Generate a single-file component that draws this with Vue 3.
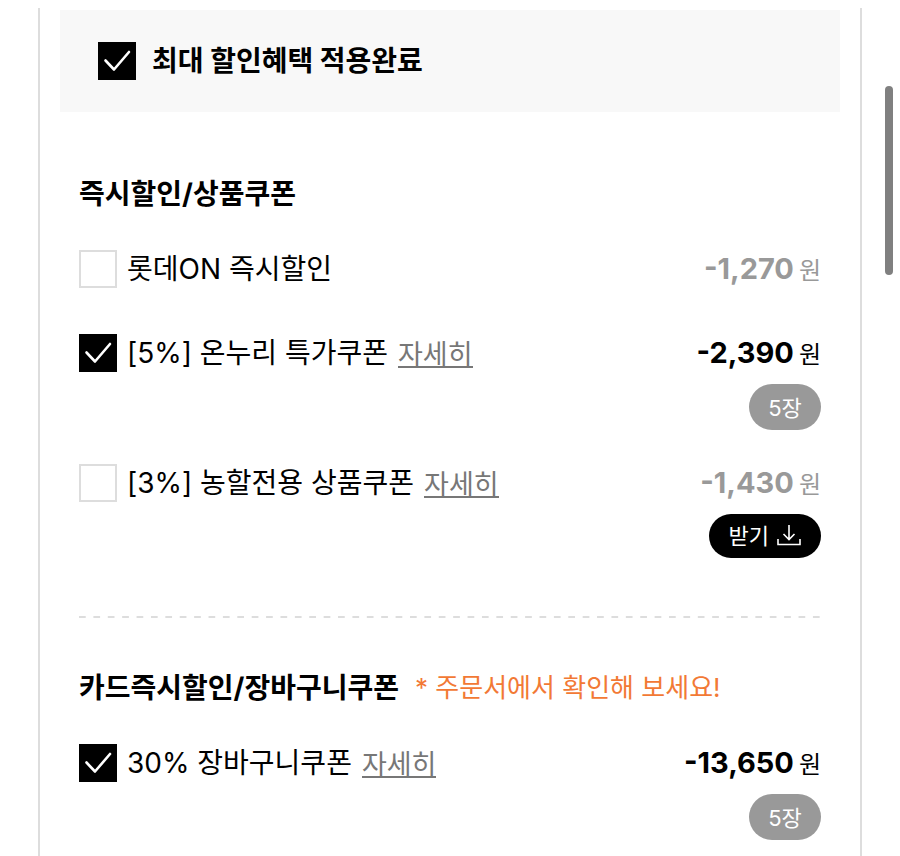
<template>
  <main class="page">
    <div class="panel">
      <label class="banner">
        <input v-model="maxApplied" type="checkbox" class="check" />
        <span class="banner-text">최대 할인혜택 적용완료</span>
      </label>

      <section v-for="group in groups" :key="group.title" class="group">
        <header class="group-head">
          <h2>{{ group.title }}</h2>
          <span v-if="group.notice" class="notice">{{ group.notice }}</span>
        </header>

        <ul class="list">
          <li v-for="item in group.items" :key="item.id" class="item">
            <div class="row">
              <input :id="item.id" v-model="item.checked" type="checkbox" class="check" />
              <label :for="item.id" class="name">{{ item.name }}</label>
              <a v-if="item.detail" href="#" class="detail" @click.prevent>자세히</a>
              <span class="price" :class="{ on: item.checked }">
                <strong>-{{ item.amount.toLocaleString('en-US') }}</strong>
                <span class="won">원</span>
              </span>
            </div>
            <span v-if="item.count" class="badge">{{ item.count }}장</span>
            <button v-if="item.downloadable" type="button" class="download">
              <span>받기</span>
              <svg viewBox="0 0 24 24" width="24" height="24" aria-hidden="true">
                <path d="M12 1v14.5M6.5 10l5.5 5.5 5.5-5.5M1 15v5.5h22V15" />
              </svg>
            </button>
          </li>
        </ul>
      </section>
    </div>
    <div class="scroll-thumb"></div>
  </main>
</template>

<script setup>
import { reactive, ref } from 'vue'

const maxApplied = ref(true)

const groups = reactive([
  {
    title: '즉시할인/상품쿠폰',
    items: [
      { id: 'instant', name: '롯데ON 즉시할인', amount: 1270, checked: false },
      { id: 'onnuri', name: '[5%] 온누리 특가쿠폰', amount: 2390, checked: true, detail: true, count: 5 },
      { id: 'nonghal', name: '[3%] 농할전용 상품쿠폰', amount: 1430, checked: false, detail: true, downloadable: true }
    ]
  },
  {
    title: '카드즉시할인/장바구니쿠폰',
    notice: '* 주문서에서 확인해 보세요!',
    items: [
      { id: 'cart', name: '30% 장바구니쿠폰', amount: 13650, checked: true, detail: true, count: 5 }
    ]
  }
])
</script>

<style>
body {
  background: #fff;
}
</style>

<style scoped>
.page {
  position: relative;
  padding: 8px 38px 0;
  font-family: Inter, 'Noto Sans CJK KR', sans-serif;
  font-size: 28px;
  color: #000;
}

.panel {
  padding: 2px 20px 16px;
  border: solid #ddd;
  border-width: 0 2px;
}

.banner {
  display: flex;
  align-items: center;
  gap: 16px;
  height: 102px;
  padding: 0 38px;
  background: #f8f8f8;
  font-weight: 700;
  cursor: pointer;
}

.banner-text {
  padding-bottom: 4px;
}

/* Checkbox */
.check {
  flex: none;
  width: 38px;
  height: 38px;
  margin: 0;
  appearance: none;
  background: #fff;
  border: 2px solid #ddd;
  cursor: pointer;
}

.check:checked {
  border-color: #000;
  background: #000 url("data:image/svg+xml,%3Csvg xmlns='http://www.w3.org/2000/svg' viewBox='0 0 38 38'%3E%3Cpath d='M7.5 18.5l8.5 9 15-17.5' fill='none' stroke='%23fff' stroke-width='2.6' stroke-linecap='round' stroke-linejoin='round'/%3E%3C/svg%3E") center / 38px 38px no-repeat;
}

/* Groups */
.group {
  padding: 60px 19px 0;
}

.group + .group {
  margin: 58px 19px 0;
  padding: 50px 0 0;
  background: linear-gradient(90deg, #ddd 7px, transparent 7px) 0 0 / calc((100% + 7px) / 52) 2px repeat-x;
}

.group-head {
  display: flex;
  align-items: center;
  gap: 16px;
  height: 40px;
}

h2 {
  margin: 0;
  font-size: 28px;
  font-weight: 700;
}

.notice {
  padding-bottom: 2px;
  font-size: 26px;
  color: #f27935;
}

.list {
  margin: 0;
  padding: 38px 0 0;
  list-style: none;
}

.item {
  display: flex;
  flex-direction: column;
  align-items: flex-end;
}

.item:nth-child(2) {
  margin-top: 46px;
}

.item:nth-child(3) {
  margin-top: 34px;
}

.row {
  display: flex;
  align-items: center;
  width: 100%;
  height: 38px;
}

.name {
  margin-left: 10px;
  padding-bottom: 4px;
  cursor: pointer;
}

.detail {
  margin-left: 10px;
  padding-top: 6px;
  border-bottom: 2px solid #777;
  font-size: 27px;
  line-height: 22px;
  color: #777;
  text-decoration: none;
}

.price {
  display: flex;
  align-items: baseline;
  gap: 5px;
  margin-left: auto;
  padding-bottom: 2px;
  color: #999;
}

.price.on {
  color: #000;
}

.price strong {
  font-size: 29px;
}

.won {
  font-size: 24px;
}

.badge,
.download {
  display: flex;
  align-items: center;
  justify-content: center;
  box-sizing: border-box;
  border-radius: 23px;
  font-size: 22px;
  color: #fff;
}

.badge {
  width: 72px;
  height: 46px;
  margin-top: 12px;
  padding-bottom: 2px;
  background: #999;
}

.download {
  gap: 8px;
  height: 44px;
  margin-top: 12px;
  padding: 0 20px;
  border: 0;
  background: #000;
  font-family: inherit;
  cursor: pointer;
}

.download span {
  padding-bottom: 4px;
}

.download svg {
  fill: none;
  stroke: #fff;
  stroke-width: 1.6;
}

/* Scroll position */
.scroll-thumb {
  position: absolute;
  top: 86px;
  right: 7px;
  width: 8px;
  height: 189px;
  border-radius: 4px;
  background: #808080;
}
</style>
